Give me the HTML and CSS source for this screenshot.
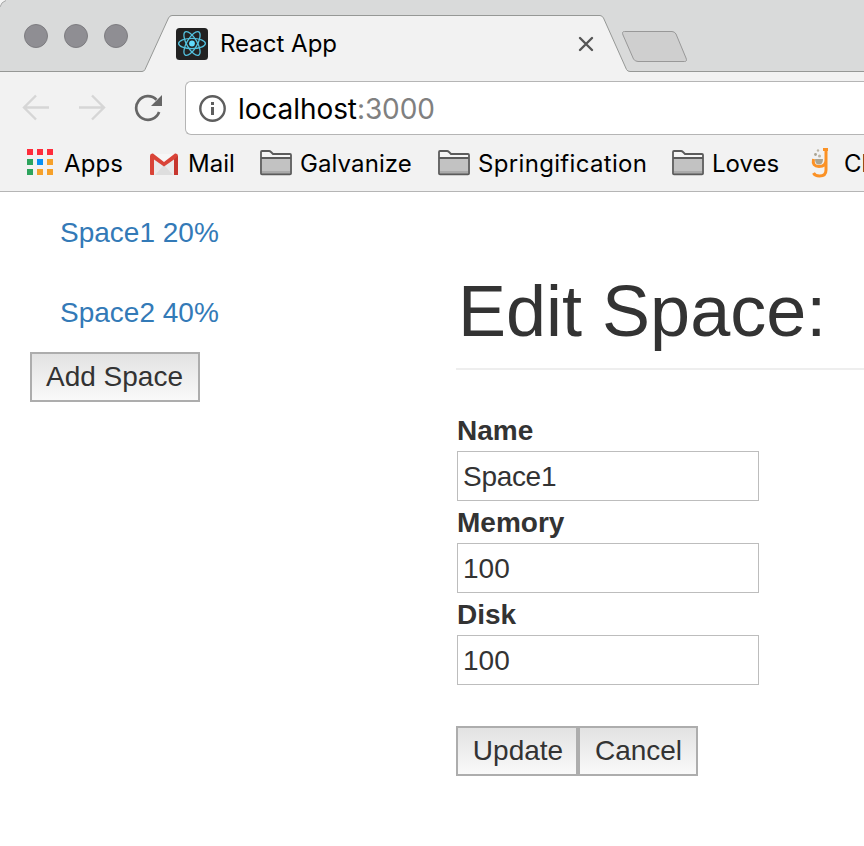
FILE: index.html
```html
<!DOCTYPE html>
<html lang="en">
<head>
<meta charset="utf-8">
<title>React App</title>
<link rel="stylesheet" href="styles.css">
</head>
<body>
<header class="browser">
  <div class="tabstrip">
    <svg class="tab-shape" width="864" height="73" viewBox="0 0 864 73">
      <path d="M0 0V7Q1 2 6 0Z" fill="#f4f4f4"/>
      <path d="M0 7Q1 2 6 .5" fill="none" stroke="#aaa"/>
      <path d="M0 71.5H142Q144 71.5 145 69.5L168.5 18Q169.8 15.500 172 15.500H600Q602 15.500 603.500 18L626.500 69.500Q627.500 71.500 630 71.500H864V73H0Z" fill="#f2f2f2"/>
      <path d="M0 71.500H142Q144 71.500 145 69.500L168.500 18Q169.800 15.500 172 15.500H600Q602 15.500 603.500 18L626.500 69.500Q627.500 71.500 630 71.500H864" fill="none" stroke="#969896"/>
      <path d="M624.500 31.500H672Q674.500 31.500 676 34L686 58Q687.500 61.500 684.500 61.500H638Q635 61.500 633.500 59L623 35Q621.500 31.500 624.500 31.500Z" fill="#cfcfcf" stroke="#989898"/>
    </svg>
    <div class="lights"><i class="light"></i><i class="light"></i><i class="light"></i></div>
    <div class="tab">
      <svg class="favicon" width="32" height="32" viewBox="0 0 32 32">
        <rect width="32" height="32" rx="3.500" fill="#222"/>
        <circle cx="16" cy="15.500" r="2.900" fill="#61dafb"/>
        <g fill="none" stroke="#53c1de" stroke-width="1.300">
          <ellipse cx="16" cy="15.500" rx="13.400" ry="5.200"/>
          <ellipse cx="16" cy="15.500" rx="13.400" ry="5.200" transform="rotate(60 16 15.500)"/>
          <ellipse cx="16" cy="15.500" rx="13.400" ry="5.200" transform="rotate(120 16 15.500)"/>
        </g>
      </svg>
      <span class="tab-title">React App</span>
      <svg class="tab-close" width="16" height="16" viewBox="0 0 16 16"><path d="M2 2L14 14M14 2L2 14" stroke="#555" stroke-width="2.400" stroke-linecap="round"/></svg>
    </div>
  </div>
  <div class="toolbar">
    <svg class="nav" width="28" height="28" viewBox="0 0 28 28"><path d="M27 13.500H2M14 1.500L2 13.500L14 25.500" fill="none" stroke="#d6d6d6" stroke-width="2.400"/></svg>
    <svg class="nav forward" width="28" height="28" viewBox="0 0 28 28"><path d="M1 13.500H26M14 1.500L26 13.500L14 25.500" fill="none" stroke="#d6d6d6" stroke-width="2.400"/></svg>
    <svg class="nav reload" width="30" height="28" viewBox="0 0 30 28"><path d="M25.100 18A11.800 11.800 0 1 1 22.500 5.800" fill="none" stroke="#666" stroke-width="2.700"/><path d="M28 1V12H17Z" fill="#666"/></svg>
    <div class="address">
      <svg width="28" height="28" viewBox="0 0 28 28"><circle cx="13.500" cy="14.500" r="12.200" fill="none" stroke="#5e5e5e" stroke-width="2.400"/><path d="M12 8H15V11H12ZM12 13H15V21H12Z" fill="#5e5e5e"/></svg>
      <span class="url">localhost<span class="port">:3000</span></span>
    </div>
  </div>
  <nav class="bookmarks">
    <a class="bookmark apps">
      <svg width="26" height="26" viewBox="0 0 26 26"><path d="M0 0H6V6H0ZM10 0H16V6H10ZM20 0H26V6H20Z" fill="#ff2d3b"/><path d="M0 10H6V16H0ZM0 20H6V26H0Z" fill="#2da45d"/><path d="M10 10H16V16H10Z" fill="#0890f5"/><path d="M20 10H26V16H20ZM10 20H16V26H10ZM20 20H26V26H20Z" fill="#f6a12b"/></svg>
      <span>Apps</span>
    </a>
    <a class="bookmark mail">
      <svg width="28" height="22" viewBox="0 0 28 22"><path d="M2 1H26V22H2Z" fill="#eaeaea"/><path d="M5 22L14 12L23 22Z" fill="#dedede"/><path d="M2 3L14 13L26 3V1H2Z" fill="#f7f7f7"/><path d="M0 3Q0 0 3 .5L14 9L25 .5Q28 0 28 3V22H24V6.500L14 13.500L4 6.500V22H1Q0 22 0 21Z" fill="#d94438"/><path d="M24 6.500L28 3V22H24Z" fill="#c7372f"/></svg>
      <span>Mail</span>
    </a>
    <a class="bookmark galvanize">
      <svg width="32" height="26" viewBox="0 0 32 26"><path d="M1 23.500V2Q1 1 2 1H9Q10 1 11 2L13 4H30Q31 4 31 5V23.500Q31 24.300 30 24.300H2Q1 24.300 1 23.500Z" fill="#f5f5f5"/><path d="M2 9H30V24H2Z" fill="#c2c2c2"/><path d="M2 21H30V24H2Z" fill="#aaa"/><path d="M1 23.500V2Q1 1 2 1H9Q10 1 11 2L13 4H30Q31 4 31 5V23.500Q31 24.300 30 24.300H2Q1 24.300 1 23.500ZM1 8H31" fill="none" stroke="#5b5b5b" stroke-width="1.800"/></svg>
      <span>Galvanize</span>
    </a>
    <a class="bookmark spring">
      <svg width="32" height="26" viewBox="0 0 32 26"><path d="M1 23.500V2Q1 1 2 1H9Q10 1 11 2L13 4H30Q31 4 31 5V23.500Q31 24.300 30 24.300H2Q1 24.300 1 23.500Z" fill="#f5f5f5"/><path d="M2 9H30V24H2Z" fill="#c2c2c2"/><path d="M2 21H30V24H2Z" fill="#aaa"/><path d="M1 23.500V2Q1 1 2 1H9Q10 1 11 2L13 4H30Q31 4 31 5V23.500Q31 24.300 30 24.300H2Q1 24.300 1 23.500ZM1 8H31" fill="none" stroke="#5b5b5b" stroke-width="1.800"/></svg>
      <span>Springification</span>
    </a>
    <a class="bookmark loves">
      <svg width="32" height="26" viewBox="0 0 32 26"><path d="M1 23.500V2Q1 1 2 1H9Q10 1 11 2L13 4H30Q31 4 31 5V23.500Q31 24.300 30 24.300H2Q1 24.300 1 23.500Z" fill="#f5f5f5"/><path d="M2 9H30V24H2Z" fill="#c2c2c2"/><path d="M2 21H30V24H2Z" fill="#aaa"/><path d="M1 23.500V2Q1 1 2 1H9Q10 1 11 2L13 4H30Q31 4 31 5V23.500Q31 24.300 30 24.300H2Q1 24.300 1 23.500ZM1 8H31" fill="none" stroke="#5b5b5b" stroke-width="1.800"/></svg>
      <span>Loves</span>
    </a>
    <a class="bookmark flask">
      <svg width="20" height="32" viewBox="0 0 20 32"><path d="M3.500 12Q2 19.500 9 19.500Q16 19.500 16 13V2.500M13 2.500H18M16 13V23Q16 29 9.500 29Q5 29 3.500 26" fill="none" stroke="#fb9226" stroke-width="3"/><path d="M5 12H13Q13 17.500 9 17.500Q5 17.500 5 12Z" fill="#aaa493"/><circle cx="5.500" cy="7.500" r="1.400" fill="#aaa493"/><circle cx="9.500" cy="9" r="1.500" fill="#bbb5a5"/><circle cx="8" cy="3.500" r="1.200" fill="#bbb5a5"/></svg>
      <span>Ch</span>
    </a>
  </nav>
</header>
<main class="page">
  <aside class="spaces">
    <a class="space">Space1 20%</a>
    <a class="space">Space2 40%</a>
    <button class="btn add">Add Space</button>
  </aside>
  <section class="editor">
    <h1>Edit Space:</h1>
    <form class="form">
      <label for="name">Name</label>
      <input id="name" type="text" value="Space1">
      <label for="memory">Memory</label>
      <input id="memory" type="text" value="100">
      <label for="disk">Disk</label>
      <input id="disk" type="text" value="100">
    </form>
    <div class="actions"><button class="btn update">Update</button><button class="btn cancel">Cancel</button></div>
  </section>
</main>
</body>
</html>
```
FILE: styles.css
```css
* { box-sizing: border-box; }
html, body { height: 100%; }
body {
  margin: 0;
  overflow: hidden;
  background: #fff;
  color: #333;
  font: 28px/40px "Liberation Sans", Arial, sans-serif;
}
svg { display: block; flex: none; }

.browser {
  height: 192px;
  background: #f2f2f2;
  border-bottom: 1px solid #b5b5b5;
  color: #000;
  font-family: Inter, "Liberation Sans", sans-serif;
  white-space: nowrap;
}
.tabstrip {
  position: relative;
  display: flex;
  height: 72px;
  background: #d9dada;
}
.tab-shape { position: absolute; top: 0; left: 0; }
.lights { display: flex; gap: 16px; padding: 24px 0 0 24px; width: 176px; position: relative; }
.light {
  width: 24px;
  height: 24px;
  border: 1px solid #7d7c80;
  border-radius: 50%;
  background: #8f8e93;
}
.tab { position: relative; display: flex; align-items: center; width: 418px; height: 32px; margin-top: 28px; }
.tab-title { margin-left: 12px; font-size: 24px; line-height: 32px; }
.tab-close { margin-left: auto; }

.toolbar { display: flex; align-items: center; height: 72px; padding-left: 22px; }
.forward { margin-left: 28px; }
.reload { margin-left: 28px; }
.address {
  display: flex;
  align-items: center;
  flex: 1;
  height: 54px;
  margin-left: 21px;
  padding-left: 13px;
  background: #fff;
  border: 1px solid #b5b5b5;
  border-right: 0;
  border-radius: 6px 0 0 6px;
}
.url { margin-left: 11px; padding-top: 2px; font-size: 28px; letter-spacing: -0.08px; }
.port { color: #808080; }

.bookmarks { display: flex; height: 38px; font-size: 24px; overflow: hidden; }
.bookmark { display: flex; align-items: center; flex: none; }
.bookmark span { padding-top: 2px; }
.apps { width: 123px; padding-left: 27px; gap: 11px; }
.apps svg { margin-bottom: 2px; }
.apps span { letter-spacing: 0.1px; }
.mail { width: 137px; padding-left: 27px; gap: 10px; }
.mail svg { margin-top: 1px; }
.galvanize { width: 178px; gap: 8px; letter-spacing: 0.1px; }
.spring { width: 234px; gap: 8px; letter-spacing: 0.33px; }
.loves { width: 138px; gap: 8px; }
.flask { gap: 14px; }

.page { display: flex; }
.spaces { width: 456px; padding: 21px 0 0 30px; }
.space { display: block; margin-bottom: 40px; padding-left: 30px; color: #337ab7; }
.space:nth-child(2) { margin-bottom: 19px; }
.btn {
  height: 50px;
  padding: 0;
  border: 2px solid #adadad;
  border-radius: 0;
  background: linear-gradient(#e2e2e2, #f9f9f9);
  color: #333;
  font: inherit;
  line-height: 44px;
}
.add { display: block; width: 170px; padding-right: 1px; }
.editor { flex: 1; }
h1 {
  height: 98px;
  margin: 80px 0 41px;
  padding-left: 2px;
  border-bottom: 2px solid #eee;
  font-size: 72px;
  font-weight: 500;
  line-height: 79px;
}
.form { display: flex; flex-direction: column; align-items: flex-start; padding-left: 1px; }
label { height: 40px; font-weight: bold; }
input {
  width: 302px;
  height: 50px;
  margin-bottom: 2px;
  padding: 3px 5px 1px;
  border: 1px solid #bdbdbd;
  color: #333;
  font: inherit;
}
#name { letter-spacing: -0.3px; }
.actions { display: flex; margin-top: 39px; }
.update { width: 122px; padding-left: 2px; }
.cancel { width: 120px; padding-left: 1px; }
```
